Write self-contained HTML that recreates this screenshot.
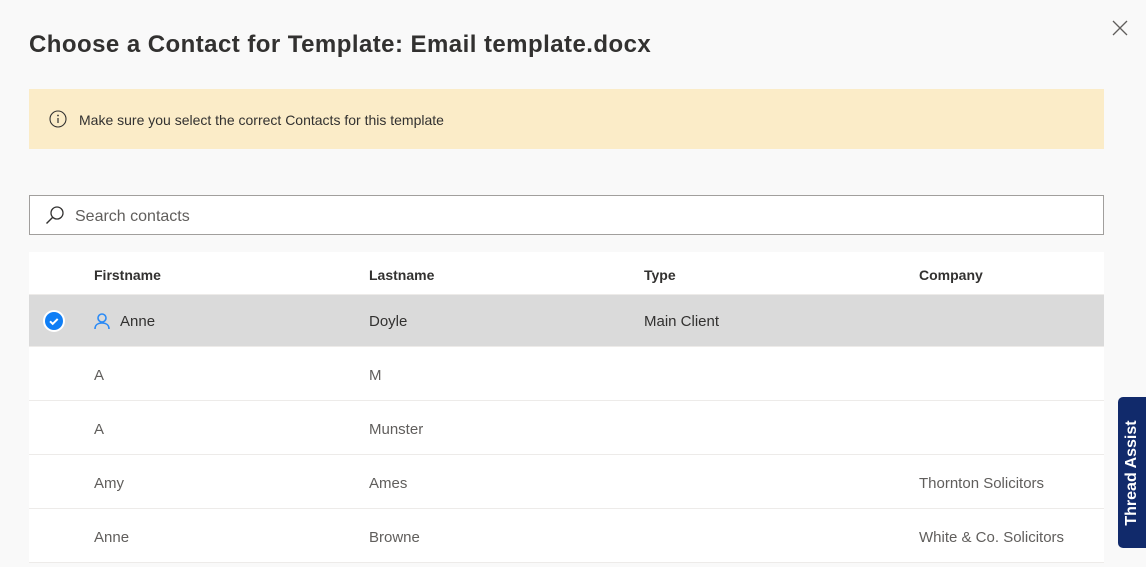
<!DOCTYPE html>
<html><head><style>
body{margin:0;width:1146px;height:567px;background:#f9f9f9;font-family:"Liberation Sans",sans-serif;overflow:hidden;position:relative;color:#323130}
.t{position:absolute;left:29px;top:31px;font-size:24px;font-weight:600;color:#323130;letter-spacing:0.45px}
.x{position:absolute;left:1112px;top:20px}
.warn{position:absolute;left:29px;top:89px;width:1075px;height:60px;background:#fbecc8}
.warn span{position:absolute;left:50px;top:23px;font-size:14px;color:#323130}
.search{position:absolute;left:29px;top:195px;width:1073px;height:38px;background:#fff;border:1px solid #a19f9d}
.search span{position:absolute;left:45px;top:12px;font-size:16px;color:#605e5c}
.tbl{position:absolute;left:29px;top:252px;width:1075px;background:#fff}
.r{position:relative;height:53px;border-bottom:1px solid #edebe9;font-size:15px;color:#605e5c}
.r div{position:absolute;top:20px}
.h{height:42px;font-weight:600;color:#323130;font-size:14px}
.h div{top:15px}
.sel{background:#dadada;color:#323130;height:51px}
.sel div{top:18px}
.c1{left:65px}.c2{left:340px}.c3{left:615px}.c4{left:890px}
.ta{position:absolute;left:1118px;top:397px;width:28px;height:151px;background:#112a6b;border-radius:5px 0 0 5px}
.ta span{position:absolute;left:50%;top:50%;transform:translate(-50%,-50%) rotate(-90deg);color:#fff;font-weight:700;font-size:16px;white-space:nowrap}
</style></head><body>
<div class="t">Choose a Contact for Template: Email template.docx</div>
<svg class="x" width="16" height="16"><path d="M1 1L15 15M15 1L1 15" stroke="#605e5c" stroke-width="1.3"/></svg>
<div class="warn"><svg style="position:absolute;left:20px;top:21px" width="18" height="18"><circle cx="9" cy="9" r="8" fill="none" stroke="#323130" stroke-width="1.1"/><path d="M9 8v5" stroke="#323130" stroke-width="1.2"/><circle cx="9" cy="5.5" r="0.9" fill="#323130"/></svg><span>Make sure you select the correct Contacts for this template</span></div>
<div class="search"><svg style="position:absolute;left:15px;top:9px" width="20" height="20"><circle cx="12" cy="8" r="6" fill="none" stroke="#323130" stroke-width="1.3"/><path d="M7.5 12.5L1.5 18.5" stroke="#323130" stroke-width="1.4"/></svg><span>Search contacts</span></div>
<div class="tbl">
<div class="r h"><div class="c1">Firstname</div><div class="c2">Lastname</div><div class="c3">Type</div><div class="c4">Company</div></div>
<div class="r sel"><svg style="position:absolute;left:13px;top:14px" width="24" height="24"><circle cx="12" cy="12" r="11" fill="#fff"/><circle cx="12" cy="12" r="9" fill="#0f7ef5"/><path d="M8 12.3l2.7 2.6 5-5" fill="none" stroke="#fff" stroke-width="2"/></svg><svg style="position:absolute;left:64px;top:17px" width="18" height="18"><circle cx="9" cy="6" r="4" fill="none" stroke="#2a8af6" stroke-width="1.6"/><path d="M2 17c0-4 3-6 7-6s7 2 7 6" fill="none" stroke="#2a8af6" stroke-width="1.6"/></svg><div style="left:91px">Anne</div><div class="c2">Doyle</div><div class="c3">Main Client</div></div>
<div class="r"><div class="c1">A</div><div class="c2">M</div></div>
<div class="r"><div class="c1">A</div><div class="c2">Munster</div></div>
<div class="r"><div class="c1">Amy</div><div class="c2">Ames</div><div class="c4">Thornton Solicitors</div></div>
<div class="r"><div class="c1">Anne</div><div class="c2">Browne</div><div class="c4">White &amp; Co. Solicitors</div></div>
</div>
<div class="ta"><span>Thread Assist</span></div>
</body></html>
